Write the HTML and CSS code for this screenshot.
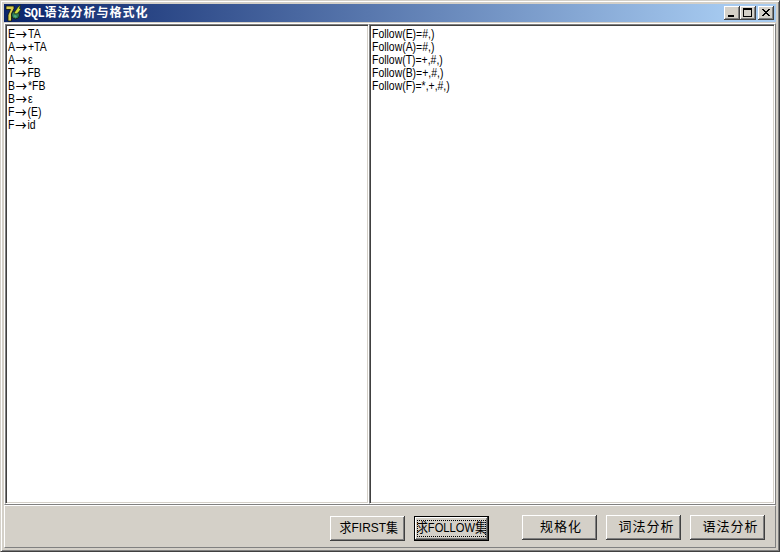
FILE: index.html
```html
<!DOCTYPE html>
<html lang="zh-CN">
<head>
<meta charset="utf-8">
<title>SQL语法分析与格式化</title>
<link rel="stylesheet" href="styles.css">
</head>
<body>
<div class="window">
  <header class="titlebar">
    <svg class="logo" width="18" height="18" viewBox="0 0 18 18">
      <path d="M2 5.500V2h8v2.500L7.500 10v7H4v-6l2.500-5.500z" fill="#d9cd4c" stroke="#10140c" stroke-width=".8"/>
      <circle cx="11.500" cy="11" r="4" fill="#2c7c59" stroke="#15241a"/>
      <path d="M10 9l4-6 2.500-2-1 3.500L17 5l-3 4-2 1z" fill="#c9dc3c" stroke="#17220e" stroke-width=".7"/>
      <path d="M9 12l2-1 2 1-1 2z" fill="#55b07c"/>
    </svg>
    <h1><span class="latin">SQL</span>语法分析与格式化</h1>
    <div class="controls">
      <button class="ctl" aria-label="最小化"><svg width="16" height="14"><path d="M4 9h6v2H4z"/></svg></button>
      <button class="ctl" aria-label="最大化"><svg width="16" height="14"><path fill-rule="evenodd" d="M3 2h9v9H3zM4 4v6h7V4z"/></svg></button>
      <button class="ctl close" aria-label="关闭"><svg width="16" height="14" shape-rendering="crispEdges"><path d="M4 3h2v1h1v1h2V4h1V3h2v1h-1v1h-1v1H9v1h1v1h1v1h1v1h-2V9H9V8H7v1H6v1H4V9h1V8h1V7h1V6H6V5H5V4H4z"/></svg></button>
    </div>
  </header>
  <main class="editors">
    <div class="memo grammar">
      <p>E<i>→</i>TA</p>
      <p>A<i>→</i>+TA</p>
      <p>A<i>→</i>ε</p>
      <p>T<i>→</i>FB</p>
      <p>B<i>→</i>*FB</p>
      <p>B<i>→</i>ε</p>
      <p>F<i>→</i>(E)</p>
      <p>F<i>→</i>id</p>
    </div>
    <div class="memo follow">
      <p>Follow(E)=#,)</p>
      <p>Follow(A)=#,)</p>
      <p>Follow(T)=+,#,)</p>
      <p>Follow(B)=+,#,)</p>
      <p>Follow(F)=*,+,#,)</p>
    </div>
  </main>
  <footer class="toolbar">
    <button class="btn set"><span class="label">求FIRST集</span></button>
    <button class="btn set focused"><span class="focus"><span class="label">求FOLLOW集</span></span></button>
    <button class="btn cjk format">规格化</button>
    <button class="btn cjk wide">词法分析</button>
    <button class="btn cjk wide">语法分析</button>
  </footer>
</div>
</body>
</html>
```
FILE: styles.css
```css
* { box-sizing: border-box; }
body { margin: 0; background: #d4d0c8; }
.window {
  width: 780px;
  height: 552px;
  display: flex;
  flex-direction: column;
  padding: 3px;
  background: #d4d0c8;
  border: 1px solid;
  border-color: #d4d0c8 #404040 #404040 #d4d0c8;
  box-shadow: inset 1px 1px #fff, inset -1px -1px #808080;
  color: #000;
  font: 12px/13px "Liberation Sans", "Noto Sans CJK SC", sans-serif;
}
.titlebar {
  height: 18px;
  display: flex;
  align-items: center;
  padding-right: 2px;
  background: linear-gradient(90deg, #0a246a, #a6caf0 94%);
  flex: none;
}
.logo { flex: none; }
h1 {
  margin: 0 0 0 2px;
  flex: 1;
  color: #fff;
  font: bold 12px/18px "Noto Sans CJK SC", sans-serif;
  letter-spacing: 1px;
  white-space: nowrap;
}
.latin {
  font-family: "Liberation Mono", monospace;
  font-size: 12px;
  letter-spacing: -.4px;
}
.controls { display: flex; }
button { padding: 0; color: #000; background: #d4d0c8; border: 0; border-radius: 0; }
.ctl {
  width: 16px;
  height: 14px;
  box-shadow: inset -1px -1px #404040, inset 1px 1px #fff, inset -2px -2px #808080;
}
.ctl svg { display: block; }
.close { margin-left: 2px; }
.editors {
  height: 482px;
  margin-top: 1px;
  display: flex;
  border: 1px solid;
  border-color: #fff #808080 #808080 #fff;
  flex: none;
}
.memo {
  background: #fff;
  border: 1px solid;
  border-color: #808080 #fff #fff #808080;
  box-shadow: inset 1px 1px #404040, inset -1px -1px #d4d0c8;
  padding: 3px 2px;
}
.grammar { width: 364px; }
.follow { flex: 1; }
.memo p {
  margin: 0;
  height: 13px;
  width: max-content;
  white-space: nowrap;
  transform: scaleX(.87);
  transform-origin: 0 0;
}
.memo i {
  display: inline-block;
  width: 15px;
  height: 13px;
  text-align: center;
  vertical-align: top;
  font: 500 13px/12px "Noto Sans CJK SC", sans-serif;
}
.toolbar {
  height: 43px;
  display: flex;
  align-items: flex-start;
  padding: 9px 0 0 325px;
  border: 1px solid;
  border-color: #fff #808080 #808080 #fff;
  flex: none;
}
.btn {
  width: 75px;
  height: 25px;
  margin: 0 9px 0 0;
  padding-bottom: 2px;
  display: flex;
  align-items: center;
  justify-content: center;
  font: 13px/16px "Liberation Sans", "Noto Sans CJK SC", sans-serif;
  white-space: nowrap;
  box-shadow: inset -1px -1px #404040, inset 1px 1px #fff, inset -2px -2px #808080;
}
.set { margin-top: 1px; }
.set:first-child { padding-left: 2px; }
.label {
  flex: none;
  transform: scaleX(.92);
}
.focused {
  margin-right: 33px;
  padding-bottom: 0;
  border: 1px solid #000;
}
.focus {
  width: 69px;
  height: 17px;
  display: flex;
  align-items: center;
  justify-content: center;
  outline: 1px dotted #000;
  outline-offset: -1px;
}
.focus .label { transform: scaleX(.86) translateY(-1px); }
.cjk { font-size: 13px; letter-spacing: 1px; }
.format { padding-left: 3px; }
.wide { padding-left: 6px; }
```
